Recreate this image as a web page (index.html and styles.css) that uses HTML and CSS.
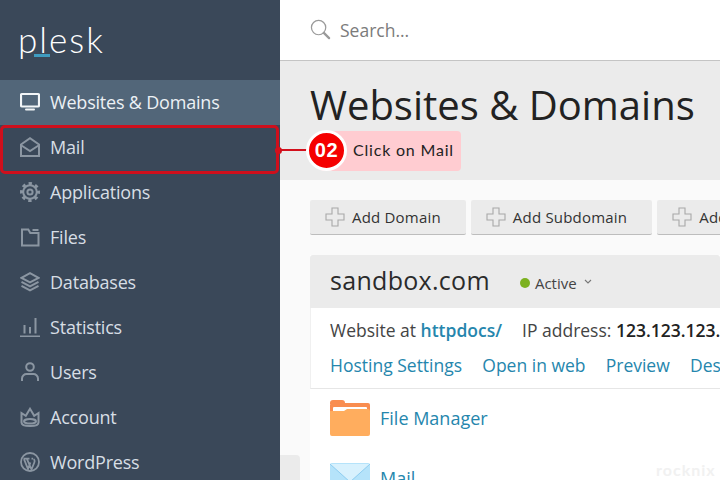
FILE: index.html
```html
<!DOCTYPE html>
<html lang="en">
<head>
<meta charset="utf-8">
<title>Plesk</title>
<link rel="stylesheet" href="styles.css">
</head>
<body>
<div class="app">
  <aside class="sidebar">
    <div class="logo"><span class="logo-text">plesk</span><span class="logo-bar"></span></div>
    <nav class="nav">
      <a class="nav-item active"><svg class="nav-icon" viewBox="0 0 20 20"><rect x="1" y="2" width="18" height="12.500" rx="1" fill="none" stroke="currentColor" stroke-width="2.200"/><rect x="5" y="16.500" width="10" height="2" rx="1" fill="currentColor"/></svg>Websites &amp; Domains</a>
      <a class="nav-item"><svg class="nav-icon" viewBox="0 0 20 20" fill="none" stroke="currentColor" stroke-width="2"><path d="M1 7.500 10 1.200l9 6.300V19H1z"/><path d="M1.500 8.500 10 14l8.500-5.500"/></svg>Mail</a>
      <a class="nav-item"><svg class="nav-icon" viewBox="0 0 20 20" fill="none" stroke="currentColor"><circle cx="10" cy="10" r="6.800" stroke-width="2"/><circle cx="10" cy="10" r="8.300" stroke-width="3.400" stroke-dasharray="3.260 3.260" stroke-dashoffset="1.630"/><circle cx="10" cy="10" r="2.600" stroke-width="2"/></svg>Applications</a>
      <a class="nav-item"><svg class="nav-icon" viewBox="0 0 20 20" fill="none" stroke="currentColor" stroke-width="2"><path d="M2 2.500h6.300l2 3.500H18.500v12.500H2z"/><path d="M12.500 3H18.500"/></svg>Files</a>
      <a class="nav-item"><svg class="nav-icon" viewBox="0 0 20 20" fill="none" stroke="currentColor" stroke-width="2"><path d="M10 1.200 18.500 5.800 10 10.400 1.500 5.800z"/><path d="M1.500 9.800 10 14.400l8.500-4.600"/><path d="M1.500 13.800 10 18.400l8.500-4.600"/></svg>Databases</a>
      <a class="nav-item"><svg class="nav-icon" viewBox="0 0 20 20" fill="none" stroke="currentColor" stroke-width="2"><path d="M0 19.500h20M4.500 16.500V8M10 16.500V10M15.500 16.500V1"/></svg>Statistics</a>
      <a class="nav-item"><svg class="nav-icon" viewBox="0 0 20 20" fill="none" stroke="currentColor" stroke-width="2"><circle cx="10" cy="5" r="3.800"/><path d="M2 19v-2.500c0-2.800 2.500-4.500 4.500-4.500h7c2 0 4.500 1.700 4.500 4.500V19"/></svg>Users</a>
      <a class="nav-item"><svg class="nav-icon" viewBox="0 0 20 20" fill="none" stroke="currentColor" stroke-width="2"><path d="M1.500 6 5.800 8.800 10 1.800l4.200 7 4.300-2.800v9.500c0 2.500-3.500 3.500-8.500 3.500s-8.500-1-8.500-3.500z"/><ellipse cx="10" cy="14.300" rx="6" ry="2.200"/></svg>Account</a>
      <a class="nav-item"><svg class="nav-icon" viewBox="0 0 20 20" fill="none" stroke="currentColor"><circle cx="10" cy="10" r="9" stroke-width="1.800"/><path d="M4 7.200 8 17 10.400 10.500M7 7.200 11.500 17.500 14.300 10.500c.8-1.800-.1-3.200-.8-3.500M3.500 6.700h6M11.500 6.700h1.500" stroke-width="1.800"/></svg>WordPress</a>
    </nav>
  </aside>
  <main class="main">
    <header class="topbar">
      <svg class="search-icon" viewBox="0 0 22 22" fill="none" stroke="#9a9a9a"><circle cx="9" cy="9" r="7.500" stroke-width="1.300"/><path d="m14.500 14.500 5.500 5.500" stroke-width="2.400" stroke-linecap="round"/></svg>
      <span class="search-text">Search...</span>
    </header>
    <section class="page-head"><h1>Websites &amp; Domains</h1></section>
    <section class="content">
      <div class="toolbar">
        <button class="btn"><svg class="plus" viewBox="0 0 20 20"><path d="M7 1h6v6h6v6h-6v6H7v-6H1V7h6z" fill="none" stroke="#a8a8a8" stroke-width="1.100"/></svg>Add Domain</button>
        <button class="btn"><svg class="plus" viewBox="0 0 20 20"><path d="M7 1h6v6h6v6h-6v6H7v-6H1V7h6z" fill="none" stroke="#a8a8a8" stroke-width="1.100"/></svg>Add Subdomain</button>
        <button class="btn"><svg class="plus" viewBox="0 0 20 20"><path d="M7 1h6v6h6v6h-6v6H7v-6H1V7h6z" fill="none" stroke="#a8a8a8" stroke-width="1.100"/></svg>Add</button>
      </div>
      <article class="card">
        <div class="card-head">
          <span class="domain">sandbox.com</span>
          <span class="dot"></span><span class="status">Active</span>
          <svg class="chev" viewBox="0 0 8 6" fill="none" stroke="#777"><path d="m1 1 3 3 3-3" stroke-width="1.100"/></svg>
        </div>
        <div class="card-info">
          <div class="info-row"><span>Website at <a class="strong-link">httpdocs/</a></span><span>IP address: <b class="ip">123.123.123.</b></span></div>
          <div class="link-row"><a>Hosting Settings</a><a>Open in web</a><a>Preview</a><a>Des</a></div>
        </div>
        <div class="tool-list">
          <div class="tool">
            <svg class="tool-icon" viewBox="0 0 40 36"><path d="M0 3a3 3 0 0 1 3-3h9a3 3 0 0 1 3 3v1H0z" fill="#f98d50"/><rect y="3" width="40" height="14" rx="2" fill="#f98d50"/><rect x="3" y="7" width="34" height="10" rx="1" fill="#fff"/><path d="M0 11h14l3-2h21a2 2 0 0 1 2 2v23a2 2 0 0 1-2 2H2a2 2 0 0 1-2-2z" fill="#ffad5e"/></svg>
            <a>File Manager</a>
          </div>
          <div class="tool tool-mail">
            <svg class="tool-icon" viewBox="0 0 40 36"><rect width="40" height="36" rx="2" fill="#b5e3fa"/><path d="M0 1 20 19 40 1" fill="#d8f1fd" stroke="#8ecdf0" stroke-width="1"/></svg>
            <a>Mail</a>
          </div>
        </div>
      </article>
    </section>
  </main>
</div>
<div class="side-tab"></div>
<div class="highlight"></div>
<div class="callout">
  <span class="callout-line"></span>
  <span class="callout-label">Click on Mail</span>
  <span class="callout-num">02</span>
</div>
<span class="watermark">rocknix</span>
</body>
</html>
```

FILE: styles.css
```css
* { box-sizing: border-box; }
html, body { margin: 0; height: 100%; overflow: hidden; }
body { font-family: "Open Sans", sans-serif; color: #222; width: 720px; height: 480px; position: relative; }
a { color: #2586ad; text-decoration: none; }
.app { display: flex; width: 720px; height: 480px; overflow: hidden; }

.sidebar { width: 280px; flex: none; background: #3a4859; }
.logo { height: 80px; padding: 17px 0 0 18px; position: relative; }
.logo-text { display: block; font-family: "Lato", sans-serif; font-weight: 300; font-size: 35px; line-height: 44px; letter-spacing: 2px; color: #fff; }
.logo-bar { position: absolute; left: 34px; top: 54px; width: 16px; height: 3px; background: #3f9cc0; }
.nav { display: flex; flex-direction: column; }
.nav-item { display: flex; align-items: center; gap: 10px; height: 45px; padding: 0 0 2px 20px; color: #d7dee5; font-size: 18px; letter-spacing: -.2px; }
.nav-icon { width: 20px; height: 20px; flex: none; color: #8b96a2; }
.nav-item.active { background: #526679; color: #ecf1f5; }
.nav-item.active .nav-icon { color: #f2f5f7; }

.main { flex: 1; min-width: 0; display: flex; flex-direction: column; background: #fafafa; }
.topbar { height: 61px; flex: none; background: #fff; border-bottom: 1px solid #c4c4c4; display: flex; align-items: center; gap: 9px; padding: 0 0 1px 30px; }
.search-icon { width: 21px; height: 21px; }
.search-text { color: #7b7b7b; font-size: 17.500px; }
.page-head { height: 119px; flex: none; background: #ebebeb; padding: 19px 0 0 30px; }
h1 { margin: 0; font-weight: 400; font-size: 40px; line-height: 50px; color: #222; white-space: nowrap; }
.content { flex: 1; padding: 20px 0 0 30px; overflow: hidden; }
.toolbar { display: flex; gap: 5px; }
.btn { flex: none; display: flex; align-items: center; gap: 7px; height: 35px; padding: 0 25px 0 15px; border: 0; border-bottom: 1px solid #bdbdbd; border-radius: 2px; background: #ebebeb; color: #333; font: 500 15px "Open Sans", sans-serif; letter-spacing: .2px; white-space: nowrap; }
.plus { width: 20px; height: 20px; }
.card { margin-top: 20px; width: 410px; background: #fff; }
.card-head { height: 53px; background: #ebebeb; display: flex; align-items: center; padding: 0 0 4px 20px; border-radius: 3px 3px 0 0; }
.domain { font-size: 25px; font-weight: 500; letter-spacing: .3px; color: #2b2b2b; }
.dot { width: 10px; height: 10px; border-radius: 50%; background: #7cb11f; margin: 7px 5px 0 30px; }
.status { font-size: 15px; font-weight: 500; color: #444; margin-top: 7px; }
.chev { width: 8px; height: 6px; margin: 5px 0 0 7px; }
.card-info { padding: 9px 0 0 19px; border-bottom: 1px solid #e6e6e6; height: 81px; border-left: 1px solid #f0f0f0; white-space: nowrap; overflow: hidden; }
.info-row { font-size: 17.500px; line-height: 26px; color: #444; display: flex; gap: 20px; }
.strong-link { font-weight: 600; }
.ip { font-weight: 600; color: #222; }
.link-row { display: flex; gap: 20.200px; font-size: 17.500px; line-height: 26px; margin-top: 9px; }
.tool-list { padding: 11px 20px 0; }
.tool { display: flex; align-items: center; gap: 10px; height: 36px; margin-bottom: 27px; font-size: 18px; white-space: nowrap; }
.tool-mail a { margin-top: -6px; }
.tool-icon { width: 40px; height: 36px; flex: none; }

.side-tab { position: absolute; left: 280px; top: 455px; width: 20px; height: 25px; background: #ebebeb; border-radius: 0 4px 0 0; }
.highlight { position: absolute; left: 0; top: 125px; width: 279px; height: 49px; border: 3px solid #cf0f1c; border-radius: 5px; }
.callout { position: absolute; left: 275px; top: 131px; width: 186px; height: 40px; }
.callout-line { position: absolute; left: 0; top: 18px; width: 40px; height: 2px; background: #d3101c; }
.callout-line::before { content: ""; position: absolute; left: 0; top: -2.500px; width: 7px; height: 7px; border-radius: 50%; background: #d3101c; }
.callout-label { position: absolute; left: 45px; top: 0; width: 141px; height: 40px; padding-left: 33px; background: #ffccd1; border-radius: 4px; font: 400 16px/38px "Lato", sans-serif; letter-spacing: .8px; color: #222; white-space: nowrap; }
.callout-num { position: absolute; left: 31px; top: -1px; width: 41px; height: 41px; border: 3px solid #fff; border-radius: 50%; background: #f50000; color: #fff; font: 700 20px/35px "Liberation Sans", sans-serif; text-align: center; letter-spacing: .7px; }
.watermark { position: absolute; left: 656px; top: 460px; font: 700 16px "Lato", sans-serif; letter-spacing: 1px; color: #f1f1f1; }
```
